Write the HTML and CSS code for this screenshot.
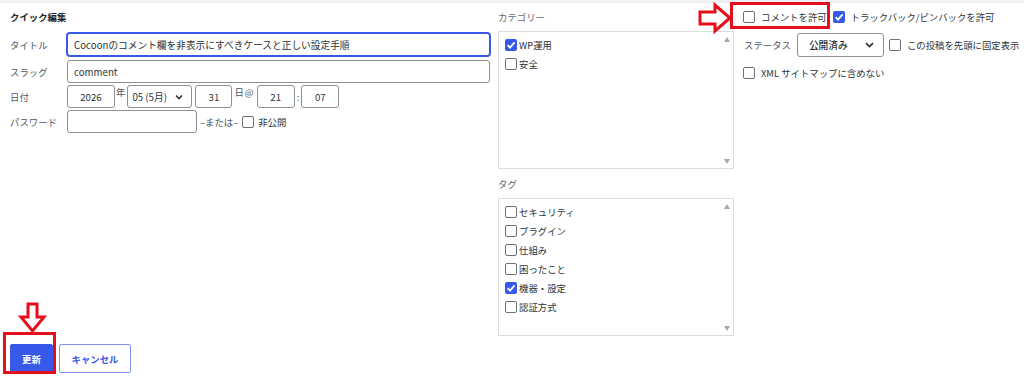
FILE: index.html
```html
<!DOCTYPE html>
<html>
<head>
    <title>クイック編集</title>
    <link rel="stylesheet" href="styles.css">
</head>
<body>
    <div class="strip"></div>
    <div class="editor">
        <div class="col-left">
            <div class="heading">クイック編集</div>
            <div class="row row-title">
                <span class="lbl">タイトル</span>
                <input class="inp inp-wide inp-focus" value="Cocoonのコメント欄を非表示にすべきケースと正しい設定手順">
            </div>
            <div class="row">
                <span class="lbl">スラッグ</span>
                <input class="inp inp-wide" value="comment">
            </div>
            <div class="row">
                <span class="lbl">日付</span>
                <input class="inp inp-year" value="2026">
                <span class="unit unit-year">年</span>
                <div class="sel sel-month">
                    <span>05 (5月)</span>
                    <svg width="8" height="6" viewBox="0 0 8 6"><path d="M1 1.5 L4 4.5 L7 1.5" fill="none" stroke="#2c3338" stroke-width="1.6"/></svg>
                </div>
                <input class="inp inp-day" value="31">
                <span class="unit unit-day">日 @</span>
                <input class="inp inp-time" value="21">
                <span class="colon">:</span>
                <input class="inp inp-time" value="07">
            </div>
            <div class="row">
                <span class="lbl">パスワード</span>
                <input class="inp inp-pass" value="">
                <span class="or">–または–</span>
                <span class="cb cb-pass"></span>
                <span class="cb-text">非公開</span>
            </div>
        </div>

        <div class="col-mid">
            <div class="grp-label">カテゴリー</div>
            <div class="box">
                <div class="box-list">
                    <div class="item"><span class="cb on"><svg width="12" height="12" viewBox="0 0 12 12"><path d="M2.6 6.2 L5 8.6 L9.6 3.4" fill="none" stroke="#fff" stroke-width="1.8"/></svg></span>WP運用</div>
                    <div class="item"><span class="cb"></span>安全</div>
                </div>
                <div class="scroll"><span class="tri-up"></span><span class="tri-down"></span></div>
            </div>

            <div class="grp-label grp-tag">タグ</div>
            <div class="box">
                <div class="box-list">
                    <div class="item"><span class="cb"></span>セキュリティ</div>
                    <div class="item"><span class="cb"></span>プラグイン</div>
                    <div class="item"><span class="cb"></span>仕組み</div>
                    <div class="item"><span class="cb"></span>困ったこと</div>
                    <div class="item"><span class="cb on"><svg width="12" height="12" viewBox="0 0 12 12"><path d="M2.6 6.2 L5 8.6 L9.6 3.4" fill="none" stroke="#fff" stroke-width="1.8"/></svg></span>機器・設定</div>
                    <div class="item"><span class="cb"></span>認証方式</div>
                </div>
                <div class="scroll"><span class="tri-up"></span><span class="tri-down"></span></div>
            </div>
        </div>

        <div class="col-right">
            <div class="opt-row">
                <span class="cb"></span>
                <span class="cb-text">コメントを許可</span>
                <span class="cb on cb-gap"><svg width="12" height="12" viewBox="0 0 12 12"><path d="M2.6 6.2 L5 8.6 L9.6 3.4" fill="none" stroke="#fff" stroke-width="1.8"/></svg></span>
                <span class="cb-text">トラックバック/ピンバックを許可</span>
            </div>
            <div class="opt-row opt-status">
                <span class="lbl-status">ステータス</span>
                <div class="sel sel-status">
                    <span>公開済み</span>
                    <svg width="9" height="6" viewBox="0 0 9 6"><path d="M1 1.2 L4.5 4.6 L8 1.2" fill="none" stroke="#2c3338" stroke-width="1.7"/></svg>
                </div>
                <span class="cb cb-sticky"></span>
                <span class="cb-text">この投稿を先頭に固定表示</span>
            </div>
            <div class="opt-row opt-xml">
                <span class="cb"></span>
                <span class="cb-text">XML サイトマップに含めない</span>
            </div>
        </div>
    </div>

    <div class="actions">
        <button class="btn btn-primary">更新</button>
        <button class="btn btn-secondary">キャンセル</button>
    </div>

    <!-- red annotations -->
    <div class="mark mark-comment"></div>
    <svg class="arrow arrow-right" width="38" height="32" viewBox="0 0 38 32">
        <polygon points="4,10 19,10 19,3 34,16 19,29 19,22 4,22" fill="#fff" stroke="#e50e1b" stroke-width="3"/>
    </svg>
    <div class="mark mark-update"></div>
    <svg class="arrow arrow-down" width="30" height="34" viewBox="0 0 30 34">
        <polygon points="10,4 19,4 19,17 26,17 14.5,31 3,17 10,17" fill="#fff" stroke="#e50e1b" stroke-width="3"/>
    </svg>
</body>
</html>
```

FILE: styles.css
```css
body {
    margin: 0;
    font-family: "Noto Sans CJK JP", "Noto Sans", sans-serif;
    font-size: 9.4px;
    color: #2c3338;
    background-color: #fff;
}

.strip {
    height: 3px;
    background-color: #f0f0f1;
}

.editor {
    display: flex;
    padding: 7px 0 0 10px;
}

/* left column: title, slug, date, password */
.col-left {
    width: 481px;
}

.heading {
    font-weight: 700;
    line-height: 14px;
    color: #1d2327;
    margin-bottom: 9px;
}

.row {
    display: flex;
    align-items: center;
    height: 23px;
    margin-bottom: 2px;
}

.row-title {
    margin-bottom: 4px;
}

.lbl {
    width: 57px;
    flex-shrink: 0;
    color: #50575e;
}

.inp {
    box-sizing: border-box;
    height: 23px;
    border: 1px solid #8c8f94;
    border-radius: 3px;
    font-family: inherit;
    font-size: 9.7px;
    color: #2c3338;
    padding: 0 6px;
    background-color: #fff;
    outline: none;
}

.inp-wide {
    width: 423px;
}

.inp-focus {
    border-color: #3858e9;
    box-shadow: 0 0 0 1px #3858e9;
}

.inp-year {
    width: 48px;
    text-align: center;
}

.unit {
    align-self: flex-start;
    line-height: 12px;
    margin-top: 1px;
    color: #50575e;
}

.unit-year {
    margin-left: 1px;
    margin-right: 2px;
}

.unit-day {
    margin-left: 2px;
    margin-right: 3px;
    word-spacing: -1px;
}

.inp-day {
    width: 37px;
    margin-left: 3px;
    text-align: center;
}

.inp-time {
    width: 38px;
    text-align: center;
}

.colon {
    margin: 0 2px;
    color: #50575e;
}

.sel {
    box-sizing: border-box;
    display: flex;
    align-items: center;
    justify-content: space-between;
    border: 1px solid #8c8f94;
    border-radius: 3px;
    font-size: 9.7px;
    color: #2c3338;
    background-color: #fff;
}

.sel-month {
    width: 65px;
    height: 23px;
    padding: 0 8px 0 4px;
}

.inp-pass {
    width: 130px;
}

.or {
    margin-left: 3px;
    color: #50575e;
}

/* checkboxes */
.cb {
    box-sizing: border-box;
    width: 12px;
    height: 12px;
    border: 1px solid #6b7075;
    border-radius: 2px;
    background-color: #fff;
    flex-shrink: 0;
    display: inline-flex;
}

.cb.on {
    border: none;
    background-color: #3858e9;
}

.cb-pass {
    margin-left: 4px;
}

.cb-text {
    margin-left: 6px;
}

.cb-pass + .cb-text {
    margin-left: 4px;
}

/* middle column: categories and tags */
.col-mid {
    width: 236px;
    margin-left: 7px;
}

.grp-label {
    line-height: 14px;
    color: #646970;
    margin-bottom: 7px;
}

.grp-tag {
    margin-top: 8px;
}

.box {
    box-sizing: border-box;
    height: 138px;
    border: 1px solid #dcdcde;
    display: flex;
}

.box-list {
    flex: 1;
    padding: 3px 0 0 6px;
}

.item {
    display: flex;
    align-items: center;
    height: 19px;
    gap: 2px;
}

.scroll {
    width: 12px;
    display: flex;
    flex-direction: column;
    justify-content: space-between;
    align-items: center;
    padding: 5px 0 4px;
}

.tri-up {
    width: 0;
    height: 0;
    border-left: 3.5px solid transparent;
    border-right: 3.5px solid transparent;
    border-bottom: 5px solid #a7aaad;
}

.tri-down {
    width: 0;
    height: 0;
    border-left: 3.5px solid transparent;
    border-right: 3.5px solid transparent;
    border-top: 5px solid #a7aaad;
}

/* right column: options */
.col-right {
    margin-left: 9px;
}

.opt-row {
    display: flex;
    align-items: center;
    height: 14px;
}

.cb-gap {
    margin-left: 6px;
}

.opt-status {
    height: 24px;
    margin-top: 9px;
}

.opt-xml {
    margin-top: 9px;
}

.lbl-status {
    color: #50575e;
    margin-left: 1px;
}

.sel-status {
    width: 87px;
    height: 24px;
    margin-left: 6px;
    padding: 0 9px 0 11px;
    font-weight: 500;
}

.cb-sticky {
    margin-left: 5px;
}

/* bottom buttons */
.actions {
    display: flex;
    gap: 6px;
    padding-left: 10px;
    margin-top: 8px;
}

.btn {
    box-sizing: border-box;
    height: 29px;
    border-radius: 2px;
    font-family: inherit;
    font-size: 9.4px;
    font-weight: 700;
    display: flex;
    align-items: center;
    justify-content: center;
    padding: 0;
}

.btn-primary {
    width: 43px;
    background-color: #3858e9;
    border: 1px solid #3858e9;
    color: #fff;
}

.btn-secondary {
    width: 72px;
    background-color: #fff;
    border: 1px solid #8096ee;
    color: #3858e9;
}

/* red annotation overlays */
.mark {
    position: absolute;
    box-sizing: border-box;
    border: 3px solid #e50e1b;
}

.mark-comment {
    left: 730px;
    top: 2px;
    width: 100px;
    height: 27px;
}

.mark-update {
    left: 3px;
    top: 332px;
    width: 53px;
    height: 42px;
}

.arrow {
    position: absolute;
}

.arrow-right {
    left: 696px;
    top: 2px;
}

.arrow-down {
    left: 18px;
    top: 300px;
}
```
